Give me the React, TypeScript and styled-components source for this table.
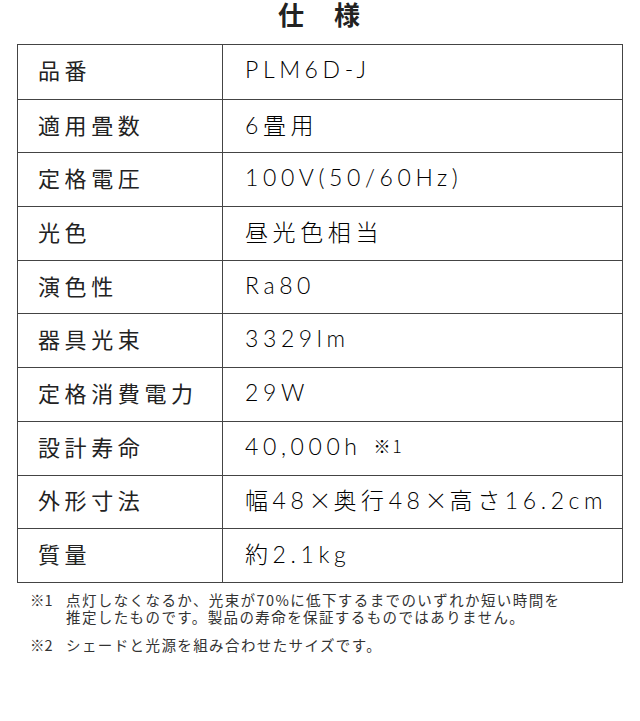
import styled, { createGlobalStyle } from 'styled-components';

const GlobalStyle = createGlobalStyle`
    html, body {
        margin: 0;
        padding: 0;
        background: #fff;
    }
    body {
        font-family: "Noto Sans CJK JP", "Noto Sans", sans-serif;
        color: #222;
    }
`;

const Page = styled.div`
    width: 640px;
    height: 721px;
    box-sizing: border-box;
    padding: 0 17px;
`;

const Title = styled.h1`
    margin: 0;
    height: 44px;
    padding: 0 0 0 10px;
    line-height: 28px;
    text-align: center;
    font-size: 26px;
    font-weight: 700;
    letter-spacing: 12px;
    color: #222;
    box-sizing: border-box;
`;

const Table = styled.div`
    width: 606px;
    border: 1.5px solid #444;
    box-sizing: border-box;
`;

const Row = styled.div`
    display: grid;
    grid-template-columns: 205px 1fr;
    height: 53.7px;
    border-top: 1.5px solid #444;
    box-sizing: border-box;

    &:first-child {
        border-top: none;
    }
`;

const Label = styled.div`
    display: flex;
    align-items: center;
    padding: 0 0 5px 20px;
    border-right: 1.5px solid #444;
    font-family: "Noto Sans CJK JP", sans-serif;
    font-size: 22px;
    font-weight: 400;
    letter-spacing: 4.6px;
    color: #222;
`;

const Value = styled.div`
    display: flex;
    align-items: center;
    padding: 0 0 5px 22px;
    font-family: "Lato", "Noto Sans CJK JP", sans-serif;
    font-size: 23px;
    font-weight: 300;
    letter-spacing: 4.6px;
    color: #000;
    white-space: nowrap;
`;

const Times = styled.span`
    font-family: "Noto Sans CJK JP", sans-serif;
    font-weight: 300;
    letter-spacing: 2px;
`;

const Note = styled.span`
    font-family: "Noto Sans CJK JP", sans-serif;
    font-size: 17px;
    margin-left: 12px;
    letter-spacing: 2px;
`;

const Notes = styled.div`
    padding: 8px 0 0 13px;
    font-family: "Noto Sans CJK JP", sans-serif;
    font-size: 14.5px;
    letter-spacing: 1.4px;
    color: #333;
`;

const NoteItem = styled.div`
    display: flex;
    line-height: 17px;
    margin-bottom: 11px;
`;

const Mark = styled.span`
    width: 36px;
    flex: none;
    letter-spacing: 0;
`;

const specs = [
    { label: '品番', value: 'PLM6D-J' },
    { label: '適用畳数', value: '6畳用' },
    { label: '定格電圧', value: '100V(50/60Hz)' },
    { label: '光色', value: '昼光色相当' },
    { label: '演色性', value: 'Ra80' },
    { label: '器具光束', value: '3329lm' },
    { label: '定格消費電力', value: '29W' },
    { label: '設計寿命', value: '40,000h', note: '※1' },
    { label: '外形寸法', value: '幅48×奥行48×高さ16.2cm' },
    { label: '質量', value: '約2.1kg' },
];

function renderValue(value: string) {
    const parts = value.split('×');
    return parts.map((p, i) => (
        <span key={i}>
            {p}
            {i < parts.length - 1 && <Times>×</Times>}
        </span>
    ));
}

export default function App() {
    return (
        <Page>
            <GlobalStyle />
            <Title>仕 様</Title>
            <Table>
                {specs.map((s) => (
                    <Row key={s.label}>
                        <Label>{s.label}</Label>
                        <Value>
                            {renderValue(s.value)}
                            {s.note && <Note>{s.note}</Note>}
                        </Value>
                    </Row>
                ))}
            </Table>
            <Notes>
                <NoteItem>
                    <Mark>※1</Mark>
                    <span>
                        点灯しなくなるか、光束が70%に低下するまでのいずれか短い時間を
                        <br />
                        推定したものです。製品の寿命を保証するものではありません。
                    </span>
                </NoteItem>
                <NoteItem>
                    <Mark>※2</Mark>
                    <span>シェードと光源を組み合わせたサイズです。</span>
                </NoteItem>
            </Notes>
        </Page>
    );
}
